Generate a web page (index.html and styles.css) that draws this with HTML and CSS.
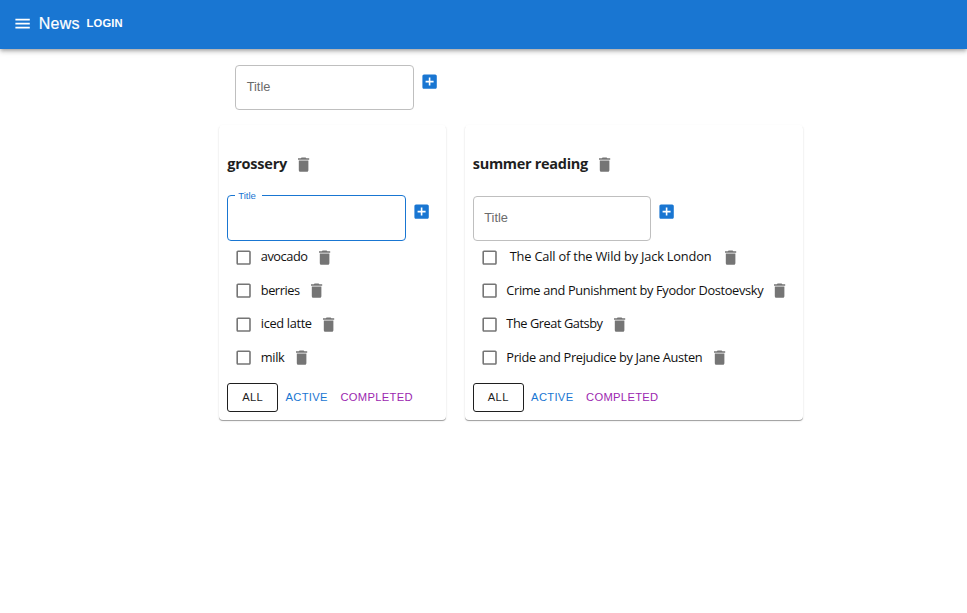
FILE: index.html
```html
<!DOCTYPE html>
<html lang="en">
<head>
<meta charset="utf-8">
<title>Todolists</title>
<link rel="stylesheet" href="styles.css">
</head>
<body>
<svg width="0" height="0" class="defs">
  <symbol id="trash" viewBox="0 0 24 24"><path d="M6 19c0 1.1.9 2 2 2h8c1.1 0 2-.9 2-2V7H6v12zM19 4h-3.500l-1-1h-5l-1 1H5v2h14V4z"/></symbol>
  <symbol id="add" viewBox="0 0 24 24"><path d="M19 3H5c-1.110 0-2 .9-2 2v14c0 1.100.89 2 2 2h14c1.100 0 2-.9 2-2V5c0-1.100-.9-2-2-2zm-2 10h-4v4h-2v-4H7v-2h4V7h2v4h4v2z"/></symbol>
  <symbol id="box" viewBox="0 0 24 24"><path d="M19 5v14H5V5h14m0-2H5c-1.100 0-2 .9-2 2v14c0 1.100.9 2 2 2h14c1.100 0 2-.9 2-2V5c0-1.100-.9-2-2-2z"/></symbol>
</svg>
<header class="bar">
  <svg class="icon menu" viewBox="0 0 24 24"><path d="M3 18h18v-2H3v2zm0-5h18v-2H3v2zm0-7v2h18V6H3z"/></svg>
  <span class="brand">News</span>
  <span class="login">LOGIN</span>
</header>
<main class="page">
  <div class="form top"><div class="field"><span class="hint">Title</span></div><svg class="icon add"><use href="#add"/></svg></div>
  <div class="lists">
    <section class="card first">
      <h3 class="name"><span>grossery</span><svg class="icon"><use href="#trash"/></svg></h3>
      <div class="form"><fieldset class="field focused"><legend>Title</legend></fieldset><svg class="icon add"><use href="#add"/></svg></div>
      <ul class="tasks">
        <li class="tight"><svg class="icon"><use href="#box"/></svg><span>avocado</span><svg class="icon"><use href="#trash"/></svg></li>
        <li class="tight"><svg class="icon"><use href="#box"/></svg><span>berries</span><svg class="icon"><use href="#trash"/></svg></li>
        <li class="snug"><svg class="icon"><use href="#box"/></svg><span>iced latte</span><svg class="icon"><use href="#trash"/></svg></li>
        <li class="snug"><svg class="icon"><use href="#box"/></svg><span>milk</span><svg class="icon"><use href="#trash"/></svg></li>
      </ul>
      <div class="filters"><span class="btn all">ALL</span><span class="btn active">ACTIVE</span><span class="btn completed">COMPLETED</span></div>
    </section>
    <section class="card second">
      <h3 class="name"><span>summer reading</span><svg class="icon"><use href="#trash"/></svg></h3>
      <div class="form"><div class="field"><span class="hint">Title</span></div><svg class="icon add"><use href="#add"/></svg></div>
      <ul class="tasks">
        <li class="spaced"><svg class="icon"><use href="#box"/></svg><span>The Call of the Wild by Jack London</span><svg class="icon"><use href="#trash"/></svg></li>
        <li class="snug"><svg class="icon"><use href="#box"/></svg><span>Crime and Punishment by Fyodor Dostoevsky</span><svg class="icon"><use href="#trash"/></svg></li>
        <li class="tight"><svg class="icon"><use href="#box"/></svg><span>The Great Gatsby</span><svg class="icon"><use href="#trash"/></svg></li>
        <li class="snug"><svg class="icon"><use href="#box"/></svg><span>Pride and Prejudice by Jane Austen</span><svg class="icon"><use href="#trash"/></svg></li>
      </ul>
      <div class="filters"><span class="btn all">ALL</span><span class="btn active">ACTIVE</span><span class="btn completed">COMPLETED</span></div>
    </section>
  </div>
</main>
</body>
</html>
```
FILE: styles.css
```css
* { box-sizing: border-box; }
body { margin: 0; min-height: 100vh; background: #fff; color: #1f1f1f; font-family: "Open Sans", "Noto Sans", sans-serif; font-size: 12.8px; }
.defs { position: absolute; }
.icon { display: block; flex: none; width: 19.2px; height: 19.2px; fill: #757575; }
.bar { display: flex; align-items: center; height: 49px; padding: 0 0 2px 12.8px; background: #1976d2; color: #fff; box-shadow: 0 2px 3px -1px rgba(0,0,0,.2), 0 3px 4px rgba(0,0,0,.14), 0 1px 8px rgba(0,0,0,.12); }
.menu { fill: #fff; }
.brand { margin-left: 6.800px; font: 500 16px/20px "Liberation Sans", sans-serif; letter-spacing: .2px; -webkit-text-stroke: .2px #fff; }
.login { margin: -1px 0 0 7px; font: bold 11.2px/20px "Liberation Sans", sans-serif; letter-spacing: .15px; }
.page { padding: 16px 0 0 219.200px; }
.form { display: flex; align-items: flex-start; height: 45px; }
.form.top { padding-left: 16px; }
.field { width: 178.600px; height: 45px; margin: 0; border: 1px solid #bfbfbf; border-radius: 4px; padding: 0 10.500px; flex: none; }
.hint { display: block; font: 12.8px/42px "Liberation Sans", sans-serif; color: #6b6b6b; }
.focused { height: 49px; margin-top: -4px; border-color: #1976d2; padding: 0 7px; }
.focused legend { height: 8px; padding: 0 6px 0 3px; font: 9.600px/8px "Liberation Sans", sans-serif; color: #1976d2; }
.add { margin: 6.500px 0 0 6px; fill: #1976d2; }
.lists { display: flex; gap: 19.200px; margin-top: 15px; }
.card { height: 295px; padding: 0 8px; border-radius: 4px; box-shadow: 0 1px 0 rgba(0,0,0,.22), 0 1px 1px rgba(0,0,0,.12), 0 1px 2.400px rgba(0,0,0,.1); }
.first { width: 226.400px; }
.second { width: 338px; }
.name { display: flex; align-items: center; height: 34px; margin: 22.500px 0 14px; font-size: 14.500px; font-weight: 700; letter-spacing: -.3px; }
.name .icon { margin-left: 7px; }
.first .name { letter-spacing: -.2px; }
.name span, .tasks span { white-space: pre; margin-top: -2px; }
.tasks { list-style: none; margin: 0; padding: 0; color: #111; letter-spacing: -.18px; }
.tasks li { display: flex; align-items: center; height: 33.600px; padding-left: 7.200px; }
.tasks .snug { letter-spacing: -.34px; }
.tasks .tight { letter-spacing: -.45px; }
.tasks span { margin-left: 7.200px; margin-right: 7.200px; }
.tasks .spaced span { margin-left: 10.600px; margin-right: 10px; }
.filters { display: flex; height: 29px; margin-top: 8px; }
.btn { display: flex; align-items: center; justify-content: center; font: 500 11.200px "Liberation Sans", sans-serif; letter-spacing: .32px; }
.all { width: 51px; border: 1px solid #1f1f1f; border-radius: 3px; }
.active { width: 57px; color: #1976d2; }
.completed { width: 83px; color: #9c27b0; }
```
